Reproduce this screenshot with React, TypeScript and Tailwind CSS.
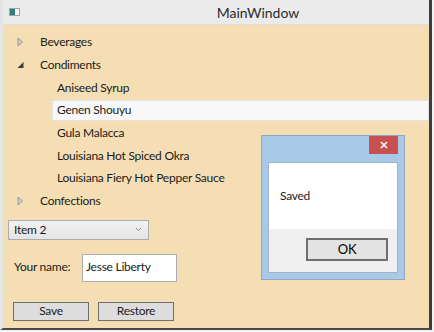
import type { FC } from 'react';

const font = { fontFamily: 'Lato, "Open Sans", sans-serif' };

const Collapsed: FC = () => (
  <svg width="7" height="10" viewBox="0 0 7 10" className="shrink-0">
    <path d="M1 1 L5.5 5 L1 9 Z" fill="#cfcfcf" stroke="#9a9a9a" strokeWidth="1" />
  </svg>
);

const Expanded: FC = () => (
  <svg width="7" height="10" viewBox="0 0 7 10" className="shrink-0">
    <path d="M6.5 2 L6.5 8 L0.5 8 Z" fill="#3c3c3c" />
  </svg>
);

const TreeRow: FC<{ label: string; level: number; expanded?: boolean; selected?: boolean }> = ({
  label,
  level,
  expanded,
  selected,
}) => {
  if (level === 0) {
    return (
      <div className="flex items-center h-[22.7px] pl-[14px]">
        <div className="w-[23px] flex items-center">{expanded ? <Expanded /> : <Collapsed />}</div>
        <span>{label}</span>
      </div>
    );
  }
  return (
    <div className="flex items-center h-[22.7px] pl-[49px]">
      <div
        className={
          selected
            ? 'flex-1 h-[21px] flex items-center pl-[4px] bg-[#f8f8f8] border border-[#e4e4e4]'
            : 'flex-1 h-[21px] flex items-center pl-[5px]'
        }
      >
        {label}
      </div>
    </div>
  );
};

const App: FC = () => {
  return (
    <div className="w-[434px] h-[332px] bg-[#f2f2f2] overflow-hidden" style={font}>
      <div className="relative w-[432px] h-[330px] flex flex-col border-l-[3px] border-l-[#e4e4e4] border-r-[3px] border-r-[#3d3d3d] border-b-[2px] border-b-[#4a4a4a]">
        {/* title bar */}
        <div className="h-[25px] bg-[#ebebeb] border-b border-[#dcdcdc] flex items-center relative">
          <div className="ml-[6px] w-[11px] h-[8px] border border-[#9aa5ad] bg-[#f4f4f4] flex">
            <div className="w-[5px] bg-[#2f7f7a]" />
          </div>
          <div className="absolute left-0 right-0 top-0 h-[25px] flex items-center justify-center pl-[84px] text-[14px] text-[#2b2b2b]">
            MainWindow
          </div>
        </div>

        {/* content */}
        <div className="flex-1 bg-[#f5deb3] text-[12px] tracking-[-0.25px] text-[#1b1b1b] pt-[6px]">
          <TreeRow label="Beverages" level={0} />
          <TreeRow label="Condiments" level={0} expanded />
          <TreeRow label="Aniseed Syrup" level={1} />
          <TreeRow label="Genen Shouyu" level={1} selected />
          <TreeRow label="Gula Malacca" level={1} />
          <TreeRow label="Louisiana Hot Spiced Okra" level={1} />
          <TreeRow label="Louisiana Fiery Hot Pepper Sauce" level={1} />
          <TreeRow label="Confections" level={0} />

          <div className="ml-[5px] mt-[7px] w-[141px] h-[20px] border border-[#acacac] bg-gradient-to-b from-[#f2f2f2] to-[#e4e4e4] flex items-center justify-between pl-[5px] pr-[6px]">
            <span>Item 2</span>
            <svg width="7" height="5" viewBox="0 0 7 5">
              <path d="M1 1 L3.5 3.5 L6 1" fill="none" stroke="#8a8a8a" strokeWidth="1" />
            </svg>
          </div>

          <div className="flex items-start mt-[14px] ml-[11px]">
            <span className="w-[68px] mt-[4px]">Your name:</span>
            <div className="w-[95px] h-[28px] bg-white border border-[#abadb3] pl-[3px] pt-[3px]">Jesse Liberty</div>
          </div>

          <div className="flex ml-[10px] mt-[20px] gap-[9px]">
            <div className="w-[76px] h-[19px] bg-[#dddddd] border border-[#707070] flex items-center justify-center">Save</div>
            <div className="w-[76px] h-[19px] bg-[#dddddd] border border-[#707070] flex items-center justify-center">Restore</div>
          </div>
        </div>

        {/* message box */}
        <div className="absolute left-[258px] top-[135px] w-[144px] h-[145px] bg-[#a9c9e9] border border-[#8fa9c4] flex flex-col text-[12px] tracking-[-0.25px]">
          <div className="h-[26px] relative">
            <div className="absolute right-[6px] top-0 w-[29px] h-[18px] bg-[#c75050] flex items-center justify-center">
              <svg width="8" height="8" viewBox="0 0 8 8">
                <path d="M1 1 L7 7 M7 1 L1 7" stroke="#ffffff" strokeWidth="1.6" />
              </svg>
            </div>
          </div>
          <div className="mx-[6px] mb-[6px] flex-1 flex flex-col border border-[#9db5cc]">
            <div className="h-[66px] bg-white flex items-center pl-[11px] text-[#1b1b1b]">Saved</div>
            <div className="flex-1 bg-[#f0f0f0] flex justify-end items-start pt-[9px] pr-[9px]">
              <div className="w-[82px] h-[23px] bg-[#e3e3e3] border-2 border-[#6f6f6f] flex items-center justify-center text-[13px]">OK</div>
            </div>
          </div>
        </div>
      </div>
    </div>
  );
};

export default App;
